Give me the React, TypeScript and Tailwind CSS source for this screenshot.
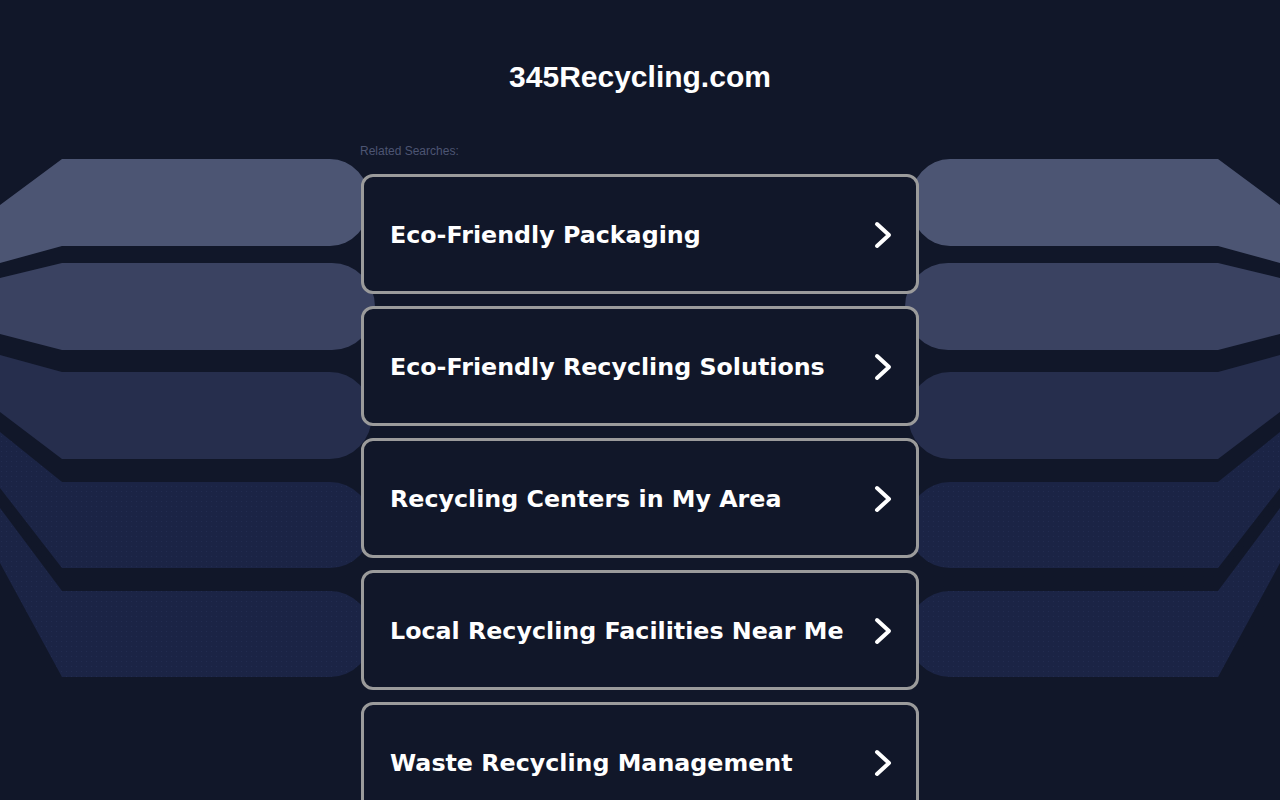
const searches = [
  "Eco-Friendly Packaging",
  "Eco-Friendly Recycling Solutions",
  "Recycling Centers in My Area",
  "Local Recycling Facilities Near Me",
  "Waste Recycling Management",
];

// stacked bands on each side of the list, tapered at the outer edge
const bands = [
  { d: "M0,205 L62,159 L330,159 A40,43.5 0 0 1 330,246 L62,246 L0,263 Z", fill: "#4c5573" },
  { d: "M0,278 L62,263 L332,263 A43,43.5 0 0 1 332,350 L62,350 L0,334 Z", fill: "#3a4261" },
  { d: "M0,355 L62,372 L330,372 A42,43.5 0 0 1 330,459 L62,459 L0,412 Z", fill: "#262e4d" },
  { d: "M0,432 L62,482 L330,482 A42,43 0 0 1 330,568 L62,568 L0,488 Z", fill: "url(#dots)" },
  { d: "M0,508 L62,591 L330,591 A42,43 0 0 1 330,677 L62,677 L0,563 Z", fill: "url(#dots)" },
];

function SideBands(props: { flip?: boolean }) {
  return (
    <svg
      width="380"
      height="800"
      viewBox="0 0 380 800"
      className={
        props.flip
          ? "absolute right-0 top-0 -scale-x-100"
          : "absolute left-0 top-0"
      }
    >
      <defs>
        <pattern id="dots" width="5" height="5" patternUnits="userSpaceOnUse">
          <rect width="5" height="5" fill="#1b2445" />
          <rect x="1" y="1" width="1" height="1" fill="#222c50" />
        </pattern>
      </defs>
      {bands.map((b, i) => (
        <path key={i} d={b.d} fill={b.fill} />
      ))}
    </svg>
  );
}

function Chevron() {
  return (
    <svg width="20" height="30" viewBox="0 0 20 30" className="mt-[2px] shrink-0">
      <polyline
        points="4,4 16,15 4,26"
        fill="none"
        stroke="white"
        strokeWidth="4"
        strokeLinecap="round"
        strokeLinejoin="round"
      />
    </svg>
  );
}

function SearchCard(props: { label: string }) {
  return (
    <a
      href="#"
      className="flex h-[120px] items-center justify-between rounded-[12px] border-[3px] border-[#9b9b9b] bg-[#111729] pl-[26px] pr-[23px]"
    >
      <span className="mt-[4px] font-['DejaVu_Sans',sans-serif] text-[23.75px] font-bold text-white">
        {props.label}
      </span>
      <Chevron />
    </a>
  );
}

export default function App() {
  return (
    <div className="relative min-h-[800px] overflow-hidden bg-[#111729]">
      <SideBands />
      <SideBands flip />

      <div className="relative mx-auto w-[558px] pt-[60px]">
        <h1 className="text-center font-['Liberation_Sans',Arial,sans-serif] text-[30px] font-bold leading-[34px] text-white">
          345Recycling.com
        </h1>

        <p className="-ml-px mt-[50px] font-['Liberation_Sans',Arial,sans-serif] text-[12px] leading-[14px] text-[#4d5573]">
          Related Searches:
        </p>

        <div className="mt-[16px] flex flex-col gap-[12px] pb-10">
          {searches.map((s) => (
            <SearchCard key={s} label={s} />
          ))}
        </div>
      </div>
    </div>
  );
}
